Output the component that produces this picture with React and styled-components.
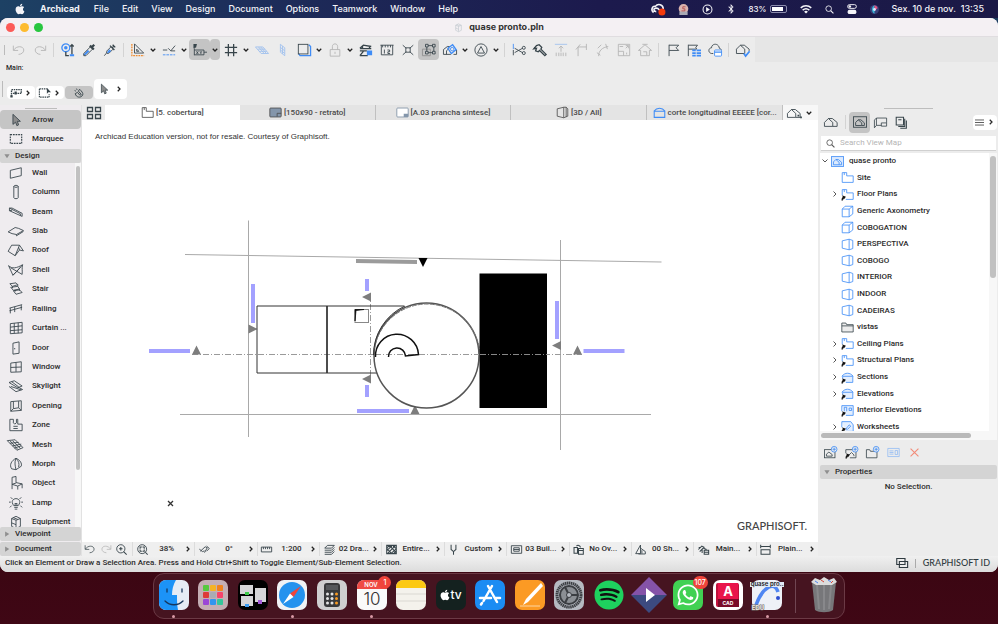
import React from 'react'
import styled, { createGlobalStyle } from 'styled-components'
import { FaApple, FaBluetoothB, FaWhatsapp, FaSpotify } from 'react-icons/fa'

const BLUE = '#3f8cf6'
const INK = '#38454b'

const GlobalStyle = createGlobalStyle`
  * {
    box-sizing: border-box;
  }
  body {
    margin: 0;
    font-family: Roboto, "Liberation Sans", sans-serif;
    font-size: 8px;
    font-weight: 500;
    line-height: 12px;
    color: #2b2b2b;
  }
  button {
    margin: 0;
    padding: 0;
    border: none;
    background: none;
    font: inherit;
    color: inherit;
    cursor: pointer;
  }
  ul {
    margin: 0;
    padding: 0;
    list-style: none;
  }
`

/* ---------- icons ---------- */

const blue = { stroke: BLUE }
const solid = { fill: 'currentColor', stroke: 'none' }
const solidBlue = { fill: BLUE, stroke: 'none' }

const shortcut = <path d="M1.500 15.500c-.5-2 0-3.500 2-4.500M2.500 10l2.500 1-1.500 2z" strokeWidth="1.300" stroke="#111" fill="#111" />
const house = <path d="M.5 13V8.500L5 4l5 4.500V13zM5 4h4.500L15 8.500V13h-5" />
const plus = <><circle cx="12.500" cy="4" r="3.500" fill="#ececec" {...blue} /><path d="M12.500 2v4M10.500 4h4" {...blue} /></>

const icons = {
  undo: <path d="M1.500 3v5.500H7M2 8C5 3 13 3 13.500 8c0 3-3 5-6 5" />,
  redo: <path d="M14.500 3v5.500H9M14 8C11 3 3 3 2.500 8c0 3 3 5 6 5" />,
  find: <>
    <circle cx="5.500" cy="5.500" r="4.500" {...blue} strokeWidth="1.500" />
    <circle cx="5.500" cy="5.500" r="2" {...solidBlue} />
    <path d="M5.500 10v4.500H9M12.500 13V2M10.500 4l2-2 2 2" strokeWidth="1.500" />
    <path d="M10 14h5" {...blue} strokeWidth="2.500" />
  </>,
  dropper: <>
    <path d="M9 3l4.500 4.500M11 5l3-3" strokeWidth="2.500" />
    <path d="M6.500 8l2 1.500L3 14.500l-1.500-1z" {...solidBlue} />
    <path d="M9.500 4.500L2 12v2.500h2.500L12 7" />
  </>,
  syringe: <>
    <path d="M8 3l5 5M10.500 5.500l2-2M11 2l3 3" strokeWidth="1.500" />
    <path d="M9 4.500L4.500 9 4 11.500 1.500 14.500M11.500 7L7 11.500 4.500 12" />
    <path d="M7 7l2.500 2L6 11.500 4.500 11z" {...solidBlue} />
  </>,
  triangle: <>
    <path d="M4 1v10.500h10.500zM6.500 7v2.500H9z" />
    <path d="M1 1v13.500h14" stroke="#f08a2c" strokeWidth="1.500" strokeDasharray="2 1" />
  </>,
  guide: <>
    <path d="M1 8h5M7 6l3 3 5-6M10 9h5" />
    <path d="M1 13.500h14" {...blue} strokeDasharray="3 1" />
  </>,
  coords: <>
    <path d="M.5 1h4l-1 4-3 1z" {...solid} />
    <path d="M1.500 6v8M1.500 8h11v5.500h-11M12.500 10.500H16" />
    <path d="M4 9.500l2 3M6 9.500l-2 3M8 9.500l1 1.500 1-1.500M9 11v1.500" />
  </>,
  grid: <path d="M5 1v14M11 1v14M1 5h14M1 11h14" strokeWidth="1.500" />,
  planeH: <path d="M.5 4.500H9L15.500 12H7zM3 7h8.500M5 9.500h8.500M4 4.500l6.500 7.500M6.500 4.500L13 12" stroke="#9fc0ee" />,
  planeV: <path d="M5 1.500l5 4v9l-5-4zM7.500 3.500v9M5 5l5 4M5 8l5 4" stroke="#9fc0ee" />,
  cube: <>
    <path d="M2 12.500l1.500 2h12V4l-2-2" {...blue} strokeWidth="1.500" />
    <rect x="1.500" y="1.500" width="11" height="11" />
  </>,
  lock: <path d="M2.500 7.500h11v7.500h-11zM5 7.500V4c0-4 6-4 6 0v3.500M8 10v2.500" stroke="#b5b5b5" />,
  trace: <>
    <path d="M1 6l4-3.500 9 1.500M1 6.500h13M4 3.500v3M12 4v3" strokeWidth="1.500" />
    <path d="M1 9h8M1 14.500l4-5M1 14.500h9" strokeWidth="1.500" />
    <path d="M9 8.500h6V14H9z" {...solidBlue} />
  </>,
  ruler: <>
    <path d="M.5 2.500h15M3 2.500V5M6 2.500V5M9 2.500V5M12 2.500V5M1.500 2.500v11h13v-11" />
    <path d="M5 7.500v4.500M8.500 8h2.500v2H9v2h2.500" />
  </>,
  cross: <path d="M2 2.500l4 3.500M14 2.500L10 6M2 13.500L6 10M14 13.500L10 10M5.500 5.500h5v5h-5z" />,
  group: <>
    <path d="M.5 7h9v7.500h-9z" stroke="#8f8f8f" />
    <path d="M5.500 3h8v8h-8z" />
    <path d="M4 1.500h3v3H4zM12 1.500h3v3h-3zM4 9.500h3v3H4zM12 9.500h3v3h-3z" fill="#c4c4c4" />
  </>,
  rotate: <>
    <path d="M.5 13V7.500L5 4h3M.5 13H9M4 13V9l3-3M15.500 8v5H12" />
    <path d="M5.500 6L11 2l4 5.500L9.500 12z" {...blue} strokeWidth="1.500" />
    <circle cx="10.500" cy="7" r="2" {...blue} />
  </>,
  delta: <><circle cx="8" cy="8" r="7" /><path d="M8 4l4 7.500H4z" /></>,
  scissors: <>
    <path d="M1.500 1v6" {...blue} />
    <path d="M1.500 8v6M3 6l9 5M3 11l9-5" />
    <circle cx="13.500" cy="5.500" r="1.700" /><circle cx="13.500" cy="11.500" r="1.700" />
  </>,
  axe: <path d="M1 6.500L4 3l3-1 3 3-1 2 6 6-1.500 1.500-6-6L6 10l-3-1 1-3z" strokeWidth="1.500" />,
  adjust: <><path d="M1 1.500h14" stroke="#9fc0ee" /><path d="M8 10V3.500M5.500 6L8 3.500 10.500 6M2.500 15v-4M5.500 15v-4M10.500 15v-4M13.500 15v-4M8 15v-4" /></>,
  corner: <path d="M3.500 15V4.500H13M1 7.500l5-6M13 1v7" />,
  fillet: <path d="M3 15C3 9 7 5 14 4M1 11l4 3M11 1l2 6M2 6l4-4" />,
  resize: <path d="M1.500 1.500h13v13h-13zM1.500 9.500h6v5M10 6l3-3M10 3h3v3M3 4h4M11 11v2" />,
  home: <path d="M.5 8.500L8 2l7.500 6.500H13v6H3v-6zM5 1.500h6M6 10h4v4" />,
  flag: <path d="M3.500 15V2M3.500 2.500h11l-3 3 3 3h-11" />,
  flagList: <>
    <path d="M1.500 15V2M1.500 2.500H12l-2 2.500 1 2H1.500" />
    <path d="M6 7.500h4v2H6zM11 7.500h5v2h-5zM6 10.500h4v2H6zM11 10.500h5v2h-5zM6 13.500h4v2H6zM11 13.500h5v2h-5z" {...solidBlue} />
  </>,
  cloud: <>
    <path d="M6 12H4C-.5 11 .5 5.500 4 5.500c0-5 8-6 9 .5 2 .5 2 1.500 2 2.500" />
    <rect x="7.500" y="8" width="8" height="7" rx="1" {...blue} fill="#fff" />
    <path d="M7.500 10.500h8" {...blue} strokeWidth="1.500" />
  </>,
  check: <>
    <path d="M.5 12V7L5 2.500 10 7v5zM5 2.500h4.500L15 7v2" />
    <path d="M9 12l2 3 4.500-5.500" {...blue} strokeWidth="2" />
  </>,
  arrow: <path d="M4.500 1.500V13l3-2.500 1.500 4 2-1L9.500 9.500h3.500z" fill="#8c8c8c" />,
  marquee: <rect x="1.500" y="3" width="13" height="10" strokeDasharray="2 1" strokeWidth="1.300" />,
  marqueeDots: <><path d="M2 3.500h13v5H2zM2 8v5" strokeDasharray="2 1" strokeWidth="1.800" /><path d="M.5 11h3v3h-3zM6 6h3v4H6z" {...solid} /></>,
  marqueeArrow: <><path d="M.5 2.500h10M.5 2.500v11h13v-4" strokeDasharray="2 1" strokeWidth="1.500" /><path d="M10.500 1v8l2-2H16z" {...solid} /></>,
  magnet: <path d="M2 9c1 6 9 8 12 2 1-3-2-6-5-9M5.500 7l3.500 4c1.500 1 3 0 2-1.500L7 5M2 9l3.500-2M7 5l2-3M3 5L1 4M5 3L4 1" strokeWidth="1.500" />,
  wall: <path d="M1.500 5L14 2v9L1.500 14z" />,
  column: <path d="M5.500 1.500c0-1.500 5-1.500 5 0v13c0 1.500-5 1.500-5 0zM5.500 1.500c0 1.500 5 1.500 5 0" />,
  beam: <path d="M.5 3.500v3L15 13V9.500L3.500 3.500zM.5 3.500L13 10M.5 6.500l3-.5M13 10v2" />,
  slab: <path d="M-1 9l8-5 4 1 5.500 2.500-8 4.500-5-1zM8.500 12v1.500l8-5" />,
  roof: <path d="M-1 9.500L3 2.500h9l4.500 6.500-4.500-1L7 14.500zM12 2.500L7 14.500M12 8l-1-3" />,
  shell: <path d="M-.5 3c4 4 9 3 16-1-1 4 0 7-.5 11L9 9.500 4.500 14zM9 9.500l6.500-7.500M2 5.500l7 4M4.500 14L13 5" />,
  stair: <path d="M1 2l7-1 2 2-6 2zM2 6l8-1 2 3-7 1.500zM5 10l7-1 3 3-7 2zM4 5v2M7 9v2M10 3v2M12 8v2" />,
  railing: <path d="M.5 7L15 3M.5 10L15 6M1.500 7v6M6.500 5.500v6M14 3.500v6" />,
  curtain: <path d="M1.500 3L15 1.500v12L1.500 14.500zM6 2.500v11.500M10.500 2v12M1.500 7L15 5.500M1.500 11L15 10" />,
  door: <path d="M4.500 2.500l7-1.500v13l-7 1zM6.500 8v1.500" />,
  window: <path d="M2 3.500L14 2v11.500L2 14zM8 3v10.500M2 8.500L14 8" />,
  skylight: <path d="M0 4l6-2 9 6-5 2zM2 8.500l12 4M0 8.500l8 6 7.500-2.500L10 9M3 3l8 6" />,
  opening: <path d="M2 3l12-1v11L2 14zM5 3v8l6-1V2.500M2 14l3-3M14 13l-3-3" />,
  zone: <path d="M1 1.500h4v4l1.500 1.500L8.500 5.500v-4H10V7h5v7.500H1zM5 9.500h5M5 12h5" />,
  mesh: <path d="M-2 3l9-1 9 9-7 3zM1 3l9 10M4 3l9 9M1 6l10-1M4 9l10-2M6 11.500l8-2.500" />,
  morph: <path d="M8 1.500C3 4 0 9 3 13.500l5 1 6-4c1-3-1-7-6-9zM8 1.500C6 6 7 10 8 14.500M8 1.500c3 3 4 6 3 10" />,
  object: <path d="M3.500 1.500L8 .5V7.500l7 1.500v5M3.500 1.500v13.500M3.500 9.500L8 8M3.500 9.500l6.500 2v4M10 11.500L15 9" />,
  lamp: <path d="M5.500 11C1.500 6 5 3 8 3s6.500 3 2.500 8zM6 13h4M6.500 15h3M7 11V8l1 1 1-1v3M0 7h2M14 7h2M2 1.500l2 2M14 1.500l-2 2M1 13l2-2M15 13l-2-2" />,
  equipment: <path d="M3 4l5-2.500L13 4v9l-5 2.500L3 13zM3 4l5 2 5-2M8 6v9M5 3l5 2M3 9l5 2" />,
  tabs: <path d="M1.500 2.500h5v4h-5zM9.500 2.500h5v4h-5zM1.500 9.500h5v4h-5zM9.500 9.500h5v4h-5z" strokeWidth="1.300" />,
  plan: <path d="M1.500 14V2h5v4.500h8.500V14zM4 2v3" />,
  sheet: <><rect x="1" y="2.500" width="14" height="11" rx="1" fill="#8496ab" /><path d="M10 13v-4h5" /></>,
  layout: <><rect x="1" y="2.500" width="14" height="11" rx="1" fill="#fff" stroke="#7b8ea3" /><path d="M9.500 9.500H15V13.500H9.500z" fill="#8496ab" stroke="none" /></>,
  view3d: <path d="M1.500 3.500L9.500 1.500v13l-8-2zM9.500 1.500h3l2 2v9l-5 2M12.500 1.500v12" />,
  section: <path d="M1.500 14V6.500h13V14zM1 6.500C5 1.500 11 1.500 15 6.500" {...blue} strokeWidth="1.300" />,
  houses: <>{house}<path d="M12 10h2v2h-2zM15 12h2v2h-2z" {...solid} /></>,
  house,
  viewMap: <><rect x=".5" y="2" width="15" height="12" /><path d="M3 12V8.500l3-3 4 3.500v3zM6 5.500h3L13 9v3h-3" /></>,
  layoutBook: <path d="M3 11.500V2.500h12.500v10H9v-4h6M3 2.500L.5 5v9.500L3 11.500h6" />,
  publisher: <path d="M1.500 1.500h9v9.500h-9zM4 13h8V3.500M6.500 15H14V5.500M4 4.500h4" strokeWidth="1.300" />,
  mapBlue: <><rect x=".5" y="2" width="15" height="12" fill="#dceafd" {...blue} /><path d="M3 12V8.500l3-3 4 3.500v3zM6 5.500h3L13 9v3h-3" {...blue} /></>,
  site: <path d="M1.500 14V2H7v4h8v8zM4 2v3" {...blue} />,
  planLink: <><path d="M1.500 9V2H7v4h8v8H6" {...blue} /><path d="M4 2v3" {...blue} />{shortcut}</>,
  axo: <path d="M1.500 5h8.500v9.500H1.500zM1.500 5L5 1.500h9.500V11L10 14.500M10 5l4.500-3.500" {...blue} />,
  persp: <path d="M1.500 3.500L10 1.500v13l-8.500-2zM10 1.500L14.500 3v10L10 14.500" {...blue} />,
  folder: <path d="M1 13.500v-11h5l1 2h8v9zM1 6h14" fill="#ececec" />,
  sectionLink: <><path d="M2 9V6.500h12.500V14H6M1 6.500C5 1.500 11 1.500 15 6.500" {...blue} fill="#e4effe" />{shortcut}</>,
  interior: <><path d="M1 2h14v12H6M1 2v7M4 9V4h3v5M10 5h3v3h-3z" {...blue} fill="#e4effe" />{shortcut}</>,
  worksheet: <><path d="M1 2h11l3 4v8H6M1 2v7M6 11l4-5 2 1.500-4 4z" {...blue} fill="#e4effe" />{shortcut}</>,
  newView: <><rect x=".5" y="4.500" width="13" height="10" /><path d="M3 12.500V10l3-2.500 4 3v2z" />{plus}</>,
  cloneView: <><path d="M1 9V4.500h12.500v10H6M5 11l3-3 3 3v1.500" />{shortcut}{plus}</>,
  newFolder: <><path d="M.5 14.500v-10h4l1 2h8v8z" />{plus}</>,
  settings: <path d="M1 3h14v10H1zM10 5.500h3v5h-3zM3 6h5M3 8h5M3 10h5" stroke="#94bbf3" />,
  remove: <path d="M1 1l14 14M15 1L1 15" stroke="#f28b78" strokeWidth="2" />,
  search: <><circle cx="6.500" cy="6.500" r="5" strokeWidth="1.500" /><path d="M10 10l5 5" strokeWidth="2" /></>,
  zoomIn: <><circle cx="7" cy="7" r="6" strokeWidth="1.300" /><path d="M11 11l4.500 4.500M7 4.500v5M4.500 7h5" strokeWidth="1.500" /></>,
  fit: <><circle cx="7.500" cy="7.500" r="6.500" strokeWidth="1.300" /><path d="M12 12l3.500 3.500M4.500 7V4.500H7M8 4.500h2.500V7M10.500 8v2.500H8M7 10.500H4.500V8" strokeWidth="1.500" /></>,
  orient: <path d="M2 10.500L9 4l3 1.500-4 7M.5 7.500L5 11l3-1M11 3l4 3.500-4 4" strokeWidth="1.300" />,
  scale: <path d="M.5 4.500h15v7H.5zM3.500 4.500v3M6.500 4.500v3M9.500 4.500v3M12.500 4.500v3" strokeWidth="1.300" />,
  layers: <path d="M1 6l4-4h10l-4 4zM1 9h10l4-4M1 12h10l4-4M1 15h10l4-4" strokeWidth="1.300" />,
  partial: <path d="M1 2h14v12H1zM1 6l4-4M1 10l8-8M2 14L14 2M7 14l8-7M11 14l4-4M1 6l7 8M5 2l10 11M10 2l5 5" strokeWidth="1.500" />,
  pen: <path d="M4.500 1v7l3.500 3 3.500-3V1M8 11v4.500" strokeWidth="1.500" />,
  model: <path d="M.5 2.500h15v11H.5zM4 5.500h8v5H4zM4 8h8" strokeWidth="1.300" />,
  override: <path d="M1.500 5h5v8.500h-5zM8 6.500h7v8.500H8zM8 9.500h7M5 3c2-2 5-1 6 2" strokeWidth="1.500" />,
  structure: <path d="M1 14L8 1.500V14zM8 6l7 5v3.500H5M10 9v5" strokeWidth="1.300" />,
  renovation: <path d="M.5 8l5-5 4 2M2.500 11l5-5 5 2M6 8v5M9 9h6.500v6H9zM1 5h3M9 12h6" strokeWidth="1.500" />,
  dims: <path d="M1 1v5M15 1v5M1 3.500h14M1.500 8.500h13V15h-13z" strokeWidth="1.500" />,
  windows: <path d="M1 2h11v8H1zM4.500 6h11v8h-11z" fill="#ececec" strokeWidth="1.500" />,
  chevron: <path d="M5.500 3.500L10 8l-4.500 4.500" strokeWidth="2.500" />,
  chevronDown: <path d="M3.500 5.500L8 10l4.500-4.500" strokeWidth="2.500" />,
  thinRight: <path d="M5 3l5 5-5 5" strokeWidth="1.800" />,
  thinDown: <path d="M3 5l5 5 5-5" strokeWidth="1.800" />,
  triDown: <path d="M1 3h14L8 14z" {...solid} />,
  triRight: <path d="M3 1v14l11-7z" {...solid} />,
  menu: <path d="M0 3.500h16M0 8h16M0 12.500h16" strokeWidth="1.500" />,
  play: <><circle cx="8" cy="8" r="6.500" strokeWidth="1.500" /><path d="M6 4.500v7L11.500 8z" {...solid} /></>,
  wifi: <><path d="M1 6.500c4-4 10-4 14 0M3.500 9.500c3-2.500 6-2.500 9 0" strokeWidth="2" /><path d="M5.500 11.500L8 14l2.500-2.500c-1.500-1.500-3.500-1.500-5 0z" {...solid} /></>,
  control: <><rect x="1" y="1" width="14" height="6" rx="3" strokeWidth="1.500" /><rect x="1" y="9" width="14" height="7" rx="3" {...solid} /><circle cx="4.500" cy="4" r="2" {...solid} /></>,
  creative: <><path d="M3 12C-1 9 2 4 5 5c3-4 9-2 9 3M6 11c-3 0-4-4 0-4s3 4 7 4" strokeWidth="1.800" /><circle cx="12.500" cy="11.500" r="4" fill="#f43a0c" stroke="none" /></>,
  badge: <><circle cx="8" cy="7" r="7" fill="#d9b3ae" stroke="none" /><path d="M2 11h12v5H2z" fill="#a9a9b4" stroke="none" /><path d="M11 4H7v3h3v3H5" stroke="#a33" /></>,
  siri: <><circle cx="8" cy="8" r="8" fill="#3a3f78" stroke="none" /><path d="M8 .5C2 3 2 13 8 15.500" fill="#36b7d8" stroke="none" /><path d="M8 .5c7 2 7 8 0 7.500" fill="#e0527f" stroke="none" /><circle cx="8" cy="8" r="2.500" fill="#dfe9ff" stroke="none" /></>,
}

const Svg = styled.svg`
  display: block;
  flex: none;
  overflow: visible;
  fill: none;
  stroke: currentColor;
  color: ${(props) => props.$color || 'inherit'};
`

const Icon = ({ name, size = 14, color }) => (
  <Svg width={size} height={size} viewBox="0 0 16 16" $color={color} aria-hidden="true">
    {icons[name]}
  </Svg>
)

/* ---------- desktop ---------- */

const Desktop = styled.div`
  min-height: 100vh;
  display: flex;
  flex-direction: column;
  background: linear-gradient(#1c3f62, #1e2a55 40%, #3b0612 90%, #3f0715);
`

const MenuBar = styled.nav`
  height: 18px;
  padding: 0 14px;
  display: flex;
  align-items: center;
  gap: 14px;
  color: #f4f4f8;
  background: linear-gradient(90deg, #1d4164, #1d2a58 30%, #1c1a4d 60%, #1b1946);
  font-family: Inter, sans-serif;
  font-size: 9px;
`

const Menus = styled.div`
  display: flex;
  gap: 13px;
`

const MenuItem = styled.button`
  font-weight: ${(props) => (props.$bold ? 700 : 500)};
`

const Tray = styled.div`
  margin-left: auto;
  display: flex;
  align-items: center;
  gap: 13px;
`

const Charge = styled.span`
  display: flex;
  align-items: center;
  gap: 3px;
  font-size: 8px;
`

const Battery = styled.i`
  width: 17px;
  height: 8px;
  padding: 1px 3px 1px 1px;
  border: 1px solid #8d8dae;
  border-radius: 2px;
  &::before {
    content: "";
    display: block;
    height: 100%;
    background: #fff;
  }
`

/* ---------- window ---------- */

const Window = styled.main`
  flex: 1;
  display: flex;
  flex-direction: column;
  overflow: hidden;
  border-radius: 8px;
  background: #ececec;
`

const TitleBar = styled.header`
  height: 19px;
  padding: 0 6px;
  display: grid;
  grid-template-columns: 1fr auto 1fr;
  align-items: center;
  background: #f4f0f3;
  border-bottom: 1px solid #e0dde0;
`

const Lights = styled.div`
  display: flex;
  gap: 5px;
`

const Light = styled.button`
  width: 9px;
  height: 9px;
  border-radius: 50%;
  background: ${(props) => props.$color};
`

const Title = styled.h1`
  margin: 0;
  display: flex;
  align-items: center;
  gap: 6px;
  font-family: Inter, sans-serif;
  font-size: 9px;
  font-weight: 700;
  color: #333;
`

const Toolbar = styled.div`
  height: 25px;
  display: flex;
  background: #e6e6e6;
`

const ToolGroup = styled.div`
  padding: 0 2px 0 4px;
  display: flex;
  align-items: center;
  background: #ececec;
  &::before {
    content: "";
    width: 3px;
    height: 10px;
    border-left: 1px solid #bbb;
  }
`

const Tool = styled.button`
  width: ${(props) => (props.$drop ? 10 : 21)}px;
  height: 21px;
  display: flex;
  align-items: center;
  justify-content: center;
  border-radius: 4px;
  color: ${(props) => (props.$dim ? '#b4b4b4' : INK)};
  background: ${(props) => (props.$on ? '#c4c4c4' : 'none')};
`

const Divider = styled.i`
  width: ${(props) => props.$width || 7}px;
  height: 14px;
  display: flex;
  justify-content: center;
  &::before {
    content: "";
    border-left: 1px solid #d3d3d3;
  }
`

const InfoBox = styled.section`
  height: 43px;
  padding: 0 2px 6px;
  display: flex;
  flex-direction: column;
  justify-content: space-between;
`

const InfoLabel = styled.span`
  padding-left: 4px;
  font-size: 7px;
`

const InfoRow = styled.div`
  display: flex;
  align-items: flex-end;
  gap: 1px;
`

const Grip = styled.i`
  width: 4px;
  height: 16px;
  align-self: center;
  border-left: 1px solid #bbb;
`

const InfoButton = styled.button`
  width: ${(props) => (props.$tall ? 33 : 28)}px;
  height: ${(props) => (props.$tall ? 20 : 13)}px;
  display: flex;
  align-items: center;
  justify-content: space-evenly;
  border-radius: 4px;
  color: ${INK};
  background: ${(props) => (props.$on ? '#c4c4c4' : '#fff')};
`

const Body = styled.div`
  flex: 1;
  min-height: 0;
  display: grid;
  grid-template-columns: 82px 1fr 180px;
`

/* ---------- toolbox ---------- */

const Toolbox = styled.aside`
  min-height: 0;
  display: flex;
  flex-direction: column;
  background: #efecef;
  border-right: 1px solid #e2e2e2;
`

const PanelGrip = styled.i`
  width: ${(props) => props.$width}px;
  margin: 3px auto 1px;
  border-top: 1px solid #bdbdbd;
`

const ToolRow = styled.button`
  width: 100%;
  height: ${(props) => props.$height || '100%'};
  padding-left: 9px;
  display: flex;
  align-items: center;
  gap: 9px;
  border-radius: 4px;
  text-align: left;
  white-space: nowrap;
  background: ${(props) => (props.$on ? '#c5c5c5' : 'none')};
`

const SectionHead = styled.button`
  width: 100%;
  height: 14px;
  margin-top: ${(props) => (props.$gap ? 1 : 0)}px;
  padding-left: 4px;
  flex: none;
  display: flex;
  align-items: center;
  gap: 5px;
  border-radius: 2px;
  background: #d4d4d4;
  svg {
    color: #8f8f8f;
  }
`

const ScrollArea = styled.div`
  flex: 1;
  min-height: 0;
  display: flex;
  overflow: hidden;
`

const Rows = styled.ul`
  flex: 1;
  min-width: 0;
  margin-bottom: -${(props) => props.$overhang}px;
  display: flex;
  flex-direction: column;
  > li {
    flex: 1;
    min-height: 0;
  }
`

const Track = styled.div`
  width: ${(props) => props.$width}px;
  padding: 3px 1px;
  background: #f7f7f7;
  &::before {
    content: "";
    display: block;
    height: ${(props) => props.$thumb};
    border-radius: 3px;
    background: #c1c1c1;
  }
`

/* ---------- centre ---------- */

const Centre = styled.section`
  min-width: 0;
  display: flex;
  flex-direction: column;
`

const Tabs = styled.div`
  height: 15px;
  display: flex;
  background: #e4e4e4;
`

const TabMenu = styled.button`
  width: ${(props) => props.$width}px;
  display: flex;
  align-items: center;
  justify-content: center;
  gap: 4px;
  color: ${INK};
  background: ${(props) => (props.$light ? '#f7f7f7' : '#ececec')};
`

const Tab = styled.button`
  flex: 1;
  min-width: 0;
  padding: 0 2px;
  display: flex;
  align-items: center;
  justify-content: center;
  gap: 2px;
  white-space: nowrap;
  color: #4a4a4a;
  background: ${(props) => (props.$on ? '#fff' : 'none')};
  & + & {
    border-right: 1px solid #c0c0c0;
  }
`

const Canvas = styled.div`
  flex: 1;
  min-height: 0;
  display: grid;
  background: #fff;
  > * {
    grid-area: 1 / 1;
  }
`

const Notice = styled.p`
  margin: 11px 13px;
  font-family: "Liberation Sans", sans-serif;
  font-weight: 400;
  color: #333;
`

const Watermark = styled.p`
  margin: 0;
  padding: 0 11px 8px;
  place-self: end;
  font-family: Lato, sans-serif;
  font-size: 11px;
  line-height: 16px;
  color: #444;
`

const Drawing = styled.svg`
  width: 100%;
  height: 100%;
  min-height: 0;
  fill: none;
`

const QuickBar = styled.div`
  height: 14px;
  display: flex;
  color: ${INK};
  background: #efefef;
`

const ZoomTools = styled.div`
  width: 50px;
  display: flex;
  align-items: center;
  gap: 4px;
  padding-left: 2px;
`

const QuickItem = styled.button`
  flex: 1;
  min-width: 0;
  display: grid;
  grid-template-columns: 18px 1fr 12px;
  align-items: center;
  justify-items: center;
  border-left: 1px solid #dcdcdc;
  color: #2b2b2b;
  white-space: nowrap;
`

/* ---------- navigator ---------- */

const Navigator = styled.aside`
  min-height: 0;
  padding: 0 1px 0 2px;
  display: flex;
  flex-direction: column;
`

const NavTools = styled.div`
  height: 24px;
  display: flex;
  align-items: center;
`

const NavMenu = styled.button`
  width: 24px;
  height: 15px;
  margin-left: auto;
  display: flex;
  align-items: center;
  justify-content: center;
  gap: 3px;
  border-radius: 4px;
  background: #fff;
`

const Search = styled.label`
  height: 15px;
  margin: 2px 1px;
  padding: 0 5px;
  display: flex;
  align-items: center;
  gap: 5px;
  color: #555;
  background: #fff;
  border-bottom: 1px solid #d0d0d0;
  input {
    flex: 1;
    min-width: 0;
    padding: 0;
    border: none;
    outline: none;
    background: none;
    font: inherit;
    font-weight: 400;
  }
  input::placeholder {
    color: #b5b5b5;
  }
`

const TreeArea = styled(ScrollArea)`
  background: #fff;
`

const TreeItem = styled.button`
  width: 100%;
  height: 100%;
  padding-left: ${(props) => (props.$root ? 0 : 10)}px;
  display: flex;
  align-items: center;
  text-align: left;
  white-space: nowrap;
  > :nth-child(2) {
    margin: 0 ${(props) => (props.$root ? 5 : 3)}px 0 1px;
  }
`

const Twist = styled.i`
  width: 10px;
  display: flex;
  justify-content: center;
  color: #444;
`

const HTrack = styled.div`
  height: 9px;
  padding: 2px 26px 2px 1px;
  background: #f7f7f7;
  &::before {
    content: "";
    display: block;
    height: 5px;
    border-radius: 3px;
    background: #b9b9b9;
  }
`

const NavBottom = styled.div`
  height: 77px;
  flex: none;
`

const NavActions = styled.div`
  height: 25px;
  display: flex;
  align-items: center;
`

const Empty = styled.p`
  margin: 2px 0;
  text-align: center;
`

/* ---------- status bar and dock ---------- */

const Status = styled.footer`
  height: 16px;
  padding: 0 8px 2px 5px;
  display: flex;
  align-items: center;
  background: linear-gradient(#f0f0f0, #dcdcdc);
`

const Brand = styled.div`
  margin-left: auto;
  display: flex;
  align-items: center;
  gap: 7px;
  font-family: Lato, sans-serif;
  font-size: 9px;
  color: #2f3a40;
  i {
    height: 9px;
    border-left: 1px solid #aaa;
  }
`

const DockArea = styled.div`
  padding: 1px 8px 5px;
  display: flex;
  justify-content: center;
`

const Dock = styled.div`
  flex: 0 1 692px;
  height: 46px;
  display: flex;
  align-items: center;
  border: 1px solid #6b3a45;
  border-radius: 11px;
  background: #461420;
`

const DockApp = styled.button`
  flex: 1;
  position: relative;
  height: 44px;
  padding-bottom: 2px;
  display: flex;
  align-items: center;
  justify-content: center;
  &::after {
    content: "";
    display: ${(props) => (props.$running ? 'block' : 'none')};
    position: absolute;
    bottom: 0;
    width: 3px;
    height: 3px;
    border-radius: 50%;
    background: #d99aa6;
  }
`

const DockSep = styled.i`
  width: 17px;
  height: 34px;
  display: flex;
  justify-content: center;
  &::before {
    content: "";
    border-left: 1px solid #704652;
  }
`

const Trash = styled(DockApp)`
  flex: none;
  width: 40px;
`

const AppIcon = styled.svg`
  display: block;
  width: 36px;
  height: 36px;
  overflow: visible;
`

const Badge = styled.span`
  position: absolute;
  top: 2px;
  right: 0;
  min-width: 13px;
  height: 13px;
  padding: 0 2px;
  border-radius: 7px;
  background: #f0443b;
  color: #fff;
  font-family: Inter, sans-serif;
  font-size: 7px;
  line-height: 13px;
`

/* ---------- data ---------- */

const menus = ['File', 'Edit', 'View', 'Design', 'Document', 'Options', 'Teamwork', 'Window', 'Help']

const tools = [
  { icon: 'undo', dim: true }, { icon: 'redo', dim: true }, 'sep',
  { icon: 'find' }, { icon: 'dropper' }, { icon: 'syringe' }, 'sep',
  { icon: 'triangle', drop: true }, { icon: 'guide', drop: true }, { icon: 'coords', drop: true, on: true },
  { icon: 'grid', drop: true }, { icon: 'planeH' }, { icon: 'planeV' }, { icon: 'cube', drop: true },
  { icon: 'lock', drop: true }, { icon: 'trace' }, { icon: 'ruler' }, { icon: 'cross' },
  { icon: 'group', on: true }, { icon: 'rotate', drop: true }, { icon: 'delta', drop: true }, 'sep',
  { icon: 'scissors' }, { icon: 'axe' }, { icon: 'adjust', dim: true }, { icon: 'corner', dim: true },
  { icon: 'fillet', dim: true }, { icon: 'resize', dim: true }, { icon: 'home', dim: true }, 'sep',
  { icon: 'flag' }, { icon: 'flagList' }, { icon: 'cloud' }, 'sep', { icon: 'check' },
]

const designTools = [
  ['wall', 'Wall'], ['column', 'Column'], ['beam', 'Beam'], ['slab', 'Slab'], ['roof', 'Roof'],
  ['shell', 'Shell'], ['stair', 'Stair'], ['railing', 'Railing'], ['curtain', 'Curtain ...'],
  ['door', 'Door'], ['window', 'Window'], ['skylight', 'Skylight'], ['opening', 'Opening'],
  ['zone', 'Zone'], ['mesh', 'Mesh'], ['morph', 'Morph'], ['object', 'Object'], ['lamp', 'Lamp'],
  ['equipment', 'Equipment'],
]

const tabs = [
  ['plan', '[5. cobertura]'], ['sheet', '[150x90 - retrato]'], ['layout', '[A.03 prancha síntese]'],
  ['view3d', '[3D / All]'], ['section', 'corte longitudinal EEEEE [cor...'],
]

const tree = [
  ['mapBlue', 'quase pronto', 'thinDown'], ['site', 'Site'], ['planLink', 'Floor Plans', 'thinRight'],
  ['axo', 'Generic Axonometry'], ['axo', 'COBOGATION'], ['persp', 'PERSPECTIVA'], ['persp', 'COBOGO'],
  ['persp', 'INTERIOR'], ['persp', 'INDOOR'], ['persp', 'CADEIRAS'], ['folder', 'vistas'],
  ['planLink', 'Ceiling Plans', 'thinRight'], ['planLink', 'Structural Plans', 'thinRight'],
  ['sectionLink', 'Sections', 'thinRight'], ['sectionLink', 'Elevations', 'thinRight'],
  ['interior', 'Interior Elevations'], ['worksheet', 'Worksheets', 'thinRight'],
]

const quickItems = [
  ['fit', '38%'], ['orient', '0°'], ['scale', '1:200'], ['layers', '02 Dra...'], ['partial', 'Entire...'],
  ['pen', 'Custom'], ['model', '03 Buil...'], ['override', 'No Ov...'], ['structure', '00 Sh...'],
  ['renovation', 'Main...'], ['dims', 'Plain...'],
]

const Tile = ({ fill }) => <rect x="3" y="3" width="30" height="30" rx="7" fill={fill} />

const dockApps = [
  { name: 'Finder', running: true, art: <>
    <Tile fill="#e6ecf5" />
    <path d="M10 3h10c-3 5-4 10-4 15h5c0 6 0 10 1 15H10a7 7 0 0 1-7-7V10a7 7 0 0 1 7-7z" fill="#1c93f7" />
    <path d="M11 12v3M26 12v3M9 24c5 5 13 5 18 0" fill="none" stroke="#17365c" strokeWidth="1.300" strokeLinecap="round" />
  </> },
  { name: 'Launchpad', art: <>
    <Tile fill="#c4aeb4" />
    {['#55c93f', '#f5b324', '#f0821e', '#dd3b38', '#a9abb3', '#f6436a', '#9b48d6', '#3195ef', '#35c79b'].map((c, i) => (
      <rect key={c} x={8 + (i % 3) * 7} y={8 + Math.floor(i / 3) * 7} width="6" height="6" rx="1" fill={c} />
    ))}
  </> },
  { name: 'Mission Control', art: <>
    <Tile fill="#000" />
    <path d="M5 8h13v9H5zM20 11h11v14H20zM6 19h12v10H6z" fill="#d6d6d8" />
    <path d="M10 15h4v3h-4z" fill="#3ecb4a" /><path d="M10 27h4v3h-4z" fill="#3e9df0" /><path d="M23 23h4v4h-4z" fill="#a45bd8" />
  </> },
  { name: 'Safari', running: true, art: <>
    <Tile fill="#f0f2f5" />
    <circle cx="18" cy="18" r="13" fill="#2492ee" />
    <path d="M27 9L19.500 20 16 16.500z" fill="#f0443b" /><path d="M9 27l7-10.500 3.500 3.500z" fill="#fff" />
  </> },
  { name: 'Calculator', art: <>
    <Tile fill="#cfcfd0" />
    <rect x="10" y="6" width="16" height="24" rx="3" fill="#38393b" />
    <path d="M12 8h12v5H12z" fill="#55585b" />
    {[0, 1, 2, 3, 4, 5, 6, 7, 8].map((i) => (
      <circle key={i} cx={13.5 + (i % 3) * 4.5} cy={17 + Math.floor(i / 3) * 4.5} r="1.500" fill={i % 3 === 2 ? '#f79a22' : '#e4e4e4'} />
    ))}
  </> },
  { name: 'Calendar', running: true, badge: '1', art: <>
    <Tile fill="#fafafa" />
    <path d="M3 12v-2a7 7 0 0 1 7-7h16a7 7 0 0 1 7 7v2z" fill="#ef4a45" />
    <text x="17" y="10" fontSize="6" fontWeight="600" fill="#fff" textAnchor="middle" fontFamily="Inter, sans-serif">NOV</text>
    <text x="18" y="28" fontSize="17" fontWeight="300" fill="#333" textAnchor="middle" fontFamily="Inter, sans-serif">10</text>
  </> },
  { name: 'Notes', art: <>
    <Tile fill="#f4f2ec" />
    <path d="M3 11v-1a7 7 0 0 1 7-7h16a7 7 0 0 1 7 7v1z" fill="#fcc913" />
    <path d="M3 17h30M3 24h30" stroke="#dad8d2" />
  </> },
  { name: 'TV', art: <>
    <Tile fill="#14211f" />
    <FaApple x="6" y="12" size="12" color="#fff" />
    <text x="23" y="22" fontSize="12" fontWeight="500" fill="#fff" textAnchor="middle" fontFamily="Inter, sans-serif">tv</text>
  </> },
  { name: 'App Store', art: <>
    <Tile fill="#1b8cf3" />
    <path d="M20 9l-8.500 15M16 9l9 16M8 21h11M23 21h5M10 26l-1 1.500" fill="none" stroke="#fff" strokeWidth="2.500" strokeLinecap="round" />
  </> },
  { name: 'Pages', art: <>
    <Tile fill="#fb9a24" />
    <path d="M29 6L14 22l-3 6 5-3L31 9z" fill="#fff" /><path d="M8 29h20" stroke="#fdd5a1" />
  </> },
  { name: 'System Preferences', art: <>
    <Tile fill="#b5b9c0" />
    <circle cx="18" cy="18" r="12" fill="none" stroke="#3b3e42" strokeWidth="3" strokeDasharray="1.500 .5" />
    <circle cx="18" cy="18" r="9" fill="#8b8f94" stroke="#3b3e42" strokeWidth="2" />
    <path d="M18 18h9M18 18l-4-8M18 18l-4 8" stroke="#3b3e42" strokeWidth="2" />
    <circle cx="18" cy="18" r="2.500" fill="#b5b9c0" stroke="#3b3e42" />
  </> },
  { name: 'Spotify', art: <><circle cx="18" cy="18" r="13" fill="#111" /><FaSpotify x="3" y="3" size="30" color="#1ed15e" /></> },
  { name: 'Player', art: <>
    <path d="M0 18L18 0l18 18z" fill="#8553a8" /><path d="M0 18l18 18 18-18z" fill="#3c4a80" />
    <path d="M15 11v14l9-7z" fill="#fff" />
  </> },
  { name: 'WhatsApp', badge: '107', art: <><Tile fill="#41d153" /><FaWhatsapp x="6" y="6" size="24" color="#fff" /></> },
  { name: 'AutoCAD', art: <>
    <Tile fill="#fff" />
    <rect x="6" y="6" width="23" height="24" rx="2" fill="#c1113c" /><path d="M8 6h20v16H8z" fill="#e9154b" /><path d="M8 22h21v8H8z" fill="#7b0b29" />
    <text x="18" y="19" fontSize="13" fontWeight="700" fill="#fff" textAnchor="middle" fontFamily="Inter, sans-serif">A</text>
    <text x="18" y="28" fontSize="5" fontWeight="700" fill="#fff" textAnchor="middle" fontFamily="Inter, sans-serif">CAD</text>
  </> },
  { name: 'Archicad', running: true, art: <>
    <Tile fill="#eef1f7" />
    <path d="M7 28C14 9 26 4 29 15" fill="none" stroke="#4f86f2" strokeWidth="3.500" /><circle cx="29" cy="21" r="2" fill="#2d4fd0" />
    <path d="M1 5h34v5H1z" fill="#dfe9f6" />
    <text x="19" y="9" fontSize="6" fontWeight="600" fill="#222" textAnchor="middle" fontFamily="Inter, sans-serif">quase pro...</text>
    <text x="9" y="33" fontSize="6" fontWeight="700" fill="#f4ece4" stroke="#6f6a66" strokeWidth="1" paintOrder="stroke" textAnchor="middle" fontFamily="Inter, sans-serif">EDU</text>
  </> },
]

const FloorPlan = () => (
  <Drawing viewBox="82 120 736 422" role="img" aria-label="Floor plan">
    <g stroke="#a9a9a9">
      <path d="M248.500 220.500V437M560.500 240v210M180 414.500h471M185 254.500l476.500 7.500" />
      <path d="M192 354.500h390M370.500 293v90" strokeDasharray="6 2 1 2" stroke="#9a9a9a" />
    </g>
    <g fill="#a3a1ff">
      <path d="M251 284h4v39h-4zM149 349h41v4h-41zM365 279h4v12h-4zM365 385h4v12h-4zM357 409h52v4h-52zM555 301h4v38h-4zM583.500 349h41v4h-41z" />
    </g>
    <path d="M356 259l61 1v4l-61-1z" fill="#9b9b9b" />
    <path d="M418.500 258h9l-4.500 9z" fill="#000" />
    <path
      d="M248.500 324.500l9 4.500-9 4.500zM192 354.500h9l-4.500-9zM362 297l9-4.500v9zM362 379l9-4.500v9zM410.500 414h9l-4.500-9zM552 345.500l9-4.500v9zM573 354.500h9l-4.500-9z"
      fill="#7d7d7d"
    />
    <g stroke="#333">
      <path d="M257 306h70v67h-70zM327 306h77M327 373h50" />
      <path d="M327 306v67" strokeWidth="1.500" />
      <rect x="355" y="309.500" width="13.500" height="13" stroke="#888" />
      <path d="M355 321v-11.500h9l-8 1z" fill="#000" stroke="#111" strokeWidth=".8" />
      <circle cx="426.500" cy="355.500" r="52.500" fill="#fff" stroke="#555" strokeWidth="1.500" />
      <path d="M373.500 355A53.500 54.500 0 0 1 480 352" stroke="#777" strokeDasharray="5 1" />
      <path d="M373.500 355A53.500 54 0 0 1 405 306" />
    </g>
    <path d="M375 354.500h105" stroke="#9a9a9a" strokeDasharray="6 2 1 2" />
    <path d="M375.500 357a21.500 21.500 0 0 1 43-2.500l-13 1.500a8.500 8.500 0 0 0-17 1" stroke="#111" strokeWidth="1.500" />
    <path d="M479.500 273.500h67.500V408h-67.500z" fill="#000" />
    <path d="M480 354.500h67" stroke="#888" strokeDasharray="6 2 1 2" />
    <path d="M168 501l5 5M173 501l-5 5" stroke="#333" strokeWidth="1.300" />
  </Drawing>
)

const App = () => {
  return (
    <Desktop>
      <GlobalStyle />
      <MenuBar>
        <FaApple size={12} />
        <MenuItem $bold>Archicad</MenuItem>
        <Menus>
          {menus.map((item) => (
            <MenuItem key={item}>{item}</MenuItem>
          ))}
        </Menus>
        <Tray>
          <Icon name="creative" size={14} />
          <Icon name="badge" size={11} />
          <Icon name="play" size={11} />
          <FaBluetoothB size={10} />
          <Charge>83% <Battery /></Charge>
          <Icon name="wifi" size={12} />
          <Icon name="search" size={9} />
          <Icon name="control" size={10} />
          <Icon name="siri" size={9} />
          <span>Sex. 10 de nov.&nbsp; 13:35</span>
        </Tray>
      </MenuBar>

      <Window>
        <TitleBar>
          <Lights>
            <Light $color="#fc5b57" aria-label="Close" />
            <Light $color="#fdbb2e" aria-label="Minimize" />
            <Light $color="#28c63f" aria-label="Zoom" />
          </Lights>
          <Title><Icon name="equipment" size={9} color="#b9c2c9" />quase pronto.pln</Title>
        </TitleBar>

        <Toolbar>
          <ToolGroup>
            {tools.map((tool, i) =>
              tool === 'sep' ? (
                <Divider key={i} />
              ) : (
                <React.Fragment key={i}>
                  <Tool $on={tool.on} $dim={tool.dim} aria-label={tool.icon}>
                    <Icon name={tool.icon} size={14} />
                  </Tool>
                  {tool.drop && (
                    <Tool $drop $on={tool.on} aria-label={tool.icon + ' options'}>
                      <Icon name="chevronDown" size={8} color="#222" />
                    </Tool>
                  )}
                </React.Fragment>
              )
            )}
          </ToolGroup>
        </Toolbar>

        <InfoBox>
          <InfoLabel>Main:</InfoLabel>
          <InfoRow>
            <Grip />
            <InfoButton aria-label="Selection"><Icon name="marqueeDots" size={12} /><Icon name="chevron" size={8} color="#222" /></InfoButton>
            <InfoButton aria-label="Marquee mode"><Icon name="marqueeArrow" size={12} /><Icon name="chevron" size={8} color="#222" /></InfoButton>
            <InfoButton $on aria-label="Magnet"><Icon name="magnet" size={10} /></InfoButton>
            <InfoButton $tall aria-label="Arrow mode"><Icon name="arrow" size={12} /><Icon name="chevron" size={8} color="#222" /></InfoButton>
          </InfoRow>
        </InfoBox>

        <Body>
          <Toolbox>
            <PanelGrip $width={32} />
            <ToolRow $on $height="19px"><Icon name="arrow" color={INK} />Arrow</ToolRow>
            <ToolRow $height="20px"><Icon name="marquee" color={INK} />Marquee</ToolRow>
            <SectionHead><Icon name="triDown" size={6} />Design</SectionHead>
            <ScrollArea>
              <Rows $overhang={5}>
                {designTools.map(([icon, label]) => (
                  <li key={label}>
                    <ToolRow><Icon name={icon} color={INK} />{label}</ToolRow>
                  </li>
                ))}
              </Rows>
              <Track $width={6} $thumb="85%" />
            </ScrollArea>
            <SectionHead><Icon name="triRight" size={6} />Viewpoint</SectionHead>
            <SectionHead $gap><Icon name="triRight" size={6} />Document</SectionHead>
          </Toolbox>

          <Centre>
            <Tabs>
              <TabMenu $width={23} aria-label="All tabs"><Icon name="tabs" size={16} /></TabMenu>
              {tabs.map(([icon, label], i) => (
                <Tab key={label} $on={i === 0}>
                  <Icon name={icon} size={13} />
                  <span>{label}</span>
                </Tab>
              ))}
              <TabMenu $light $width={35} aria-label="Tab options">
                <Icon name="houses" size={14} />
                <Icon name="chevronDown" size={8} color="#222" />
              </TabMenu>
            </Tabs>
            <Canvas>
              <FloorPlan />
              <Notice>Archicad Education version, not for resale. Courtesy of Graphisoft.</Notice>
              <Watermark>GRAPHISOFT.</Watermark>
            </Canvas>
            <QuickBar>
              <ZoomTools>
                <Icon name="undo" size={12} />
                <Icon name="redo" size={12} color="#b4b4b4" />
                <Icon name="zoomIn" size={11} />
              </ZoomTools>
              {quickItems.map(([icon, label]) => (
                <QuickItem key={icon}>
                  <Icon name={icon} size={11} color={INK} />
                  <span>{label}</span>
                  <Icon name="chevron" size={8} color="#222" />
                </QuickItem>
              ))}
            </QuickBar>
          </Centre>

          <Navigator>
            <PanelGrip $width={49} />
            <NavTools>
              <Tool aria-label="Project map"><Icon name="house" size={14} /></Tool>
              <Divider $width={8} />
              <Tool $on aria-label="View map"><Icon name="viewMap" size={14} /></Tool>
              <Tool aria-label="Layout book"><Icon name="layoutBook" size={13} /></Tool>
              <Tool aria-label="Publisher sets"><Icon name="publisher" size={13} /></Tool>
              <NavMenu aria-label="Navigator options"><Icon name="menu" size={9} color="#444" /><Icon name="chevron" size={8} /></NavMenu>
            </NavTools>
            <Search>
              <Icon name="search" size={9} />
              <input type="text" placeholder="Search View Map" aria-label="Search View Map" />
            </Search>
            <TreeArea>
              <Rows $overhang={4}>
                {tree.map(([icon, label, twist]) => (
                  <li key={label}>
                    <TreeItem $root={twist === 'thinDown'}>
                      <Twist>{twist && <Icon name={twist} size={8} />}</Twist>
                      <Icon name={icon} size={13} color={INK} />
                      {label}
                    </TreeItem>
                  </li>
                ))}
              </Rows>
              <Track $width={8} $thumb="45%" />
            </TreeArea>
            <HTrack />
            <NavActions>
              {['newView', 'cloneView', 'newFolder', 'settings', 'remove'].map((name) => (
                <Tool key={name} aria-label={name}><Icon name={name} size={name === 'remove' ? 9 : 13} /></Tool>
              ))}
            </NavActions>
            <SectionHead><Icon name="triDown" size={6} />Properties</SectionHead>
            <NavBottom>
              <Empty>No Selection.</Empty>
            </NavBottom>
          </Navigator>
        </Body>

        <Status>
          <span>Click an Element or Draw a Selection Area. Press and Hold Ctrl+Shift to Toggle Element/Sub-Element Selection.</span>
          <Brand>
            <Icon name="windows" size={12} />
            <i />
            <span>GRAPHISOFT ID</span>
          </Brand>
        </Status>
      </Window>

      <DockArea>
        <Dock>
          {dockApps.map((app) => (
            <DockApp key={app.name} $running={app.running} aria-label={app.name}>
              <AppIcon viewBox="0 0 36 36">{app.art}</AppIcon>
              {app.badge && <Badge>{app.badge}</Badge>}
            </DockApp>
          ))}
          <DockSep />
          <Trash aria-label="Trash">
            <AppIcon viewBox="0 0 36 36">
              <path d="M6 5h24l-3 28c-4 3-14 3-18 0z" fill="#77777a" />
              <path d="M11 8l2 24M18 8v25M25 8l-2 24" stroke="#88888b" strokeWidth="2" />
              <path d="M5 5l4-4 5 2 4-3 5 3 5-2 3 4-5 3H10z" fill="#dcdcdc" />
              <path d="M9 4l3 2M22 3l3 2" stroke="#4f86f2" /><path d="M15 3l3 2M27 4l-2 2" stroke="#d6483c" />
            </AppIcon>
          </Trash>
        </Dock>
      </DockArea>
    </Desktop>
  )
}

export default App
